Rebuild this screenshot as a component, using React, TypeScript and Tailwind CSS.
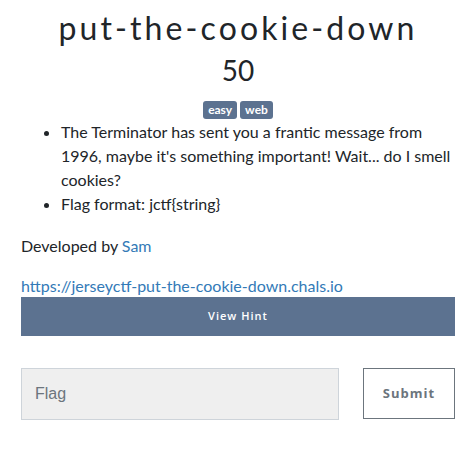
export default function App() {
  return (
    <div className="w-[473px] h-[452px] bg-white text-[#212529] pl-[21px] pr-[18px]" style={{ fontFamily: 'Lato, "Open Sans", sans-serif' }}>
      <h1 className="pt-[6px] text-center text-[32px] leading-[44px] font-normal tracking-[3.1px] text-[#212529]" style={{ fontFamily: 'Lato, sans-serif' }}>
        put-the-cookie-down
      </h1>
      <div className="mt-[2px] text-center text-[28px] leading-[36px] font-normal text-[#212529]">50</div>
      <div className="mt-[13px] flex justify-center gap-[3px]">
        <span className="h-[18px] px-[5px] rounded-[3px] bg-[#5c7290] text-white text-[12px] font-bold leading-[18px]">easy</span>
        <span className="h-[18px] px-[5px] rounded-[3px] bg-[#5c7290] text-white text-[12px] font-bold leading-[18px]">web</span>
      </div>
      <ul className="mt-[1px] list-disc pl-[40px] text-[16px] leading-[24px]">
        <li>The Terminator has sent you a frantic message from 1996, maybe it's something important! Wait... do I smell cookies?</li>
        <li>Flag format: jctf&#123;string&#125;</li>
      </ul>
      <p className="mt-[18px] text-[16px] leading-[24px]">
        Developed by <span className="text-[#337ab7]">Sam</span>
      </p>
      <p className="mt-[16px] text-[16px] leading-[24px] text-[#337ab7]">https://jerseyctf-put-the-cookie-down.chals.io</p>
      <button className="-mt-[1px] block w-full h-[39px] bg-[#5c7290] text-white text-[11px] font-semibold tracking-[1px]" style={{ fontFamily: '"Open Sans", sans-serif' }}>
        View Hint
      </button>
      <div className="mt-[32px] flex gap-[24px]">
        <input
          placeholder="Flag"
          className="w-[318px] h-[52px] bg-[#efefef] border border-[#ced4da] px-[13px] text-[16px] placeholder:text-[#6c757d] outline-none"
          style={{ fontFamily: '"Liberation Sans", Arial, sans-serif' }}
        />
        <button className="flex-1 h-[51px] border border-[#6c757d] bg-white text-[#6c757d] text-[13px] font-bold tracking-[1px]" style={{ fontFamily: '"Open Sans", sans-serif' }}>
          Submit
        </button>
      </div>
    </div>
  );
}
